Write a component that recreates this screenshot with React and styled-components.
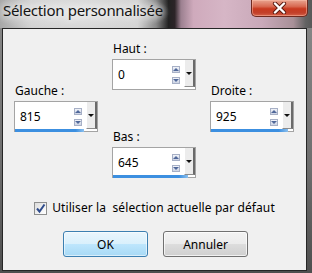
import React from "react";
import styled, { createGlobalStyle } from "styled-components";

const GlobalStyle = createGlobalStyle`
  html, body {
    margin: 0;
    padding: 0;
    background: #5c5c5c;
  }
  body {
    font-family: "Noto Sans", "Open Sans", sans-serif;
    color: #000;
  }
`;

const Window = styled.div`
  width: 312px;
  height: 273px;
  display: flex;
  flex-direction: column;
  overflow: hidden;
  background: linear-gradient(180deg, #8a8a8a 0%, #6e6e6e 60%, #4e4e4e 100%);
`;

const TitleBar = styled.div`
  height: 28px;
  flex: none;
  display: flex;
  align-items: flex-start;
  justify-content: space-between;
  background:
    radial-gradient(ellipse 90px 22px at 80px 12px, #e6e6e6 0%, rgba(222,222,222,0.6) 60%, rgba(222,222,222,0) 100%),
    linear-gradient(90deg, #a8a8a8 0%, #cfcfcf 10%, #d2d2d2 44%, #8a8a8a 50%, #222 54%, #2c2428 56%, #9c8090 58%, #cfaabc 62%, #d6b6c6 72%, #c9a9b9 84%, #a89098 94%, #626262 98%, #585858 100%);
`;

const Title = styled.span`
  padding: 0 0 0 3px;
  font-size: 15px;
  line-height: 20px;
  letter-spacing: -0.3px;
  color: #141414;
  text-shadow: 0 0 6px #f2f2f2, 0 0 10px #eee;
`;

const CloseButton = styled.div`
  width: 57px;
  height: 17px;
  margin-right: 4px;
  box-sizing: border-box;
  border: 1px solid #6e2a20;
  border-top: none;
  border-radius: 0 0 5px 5px;
  display: flex;
  align-items: center;
  justify-content: center;
  background: linear-gradient(180deg, #e9a48f 0%, #d86a52 40%, #c8391f 55%, #c2402a 80%, #d6624a 100%);
  box-shadow: inset 0 0 0 1px rgba(255, 200, 180, 0.45);
`;

const Client = styled.div`
  flex: 1;
  margin: 0 5px 2px 2px;
  border: 1px solid #262626;
  background: #f0f0f0;
  display: flex;
  flex-direction: column;
`;

const Fields = styled.div`
  display: grid;
  grid-template-columns: repeat(3, 84px);
  column-gap: 14px;
  padding-left: 11px;
`;

const Column = styled.div`
  display: flex;
  flex-direction: column;
  padding-top: ${(p) => p.$top}px;
`;

const Label = styled.div`
  font-size: 12px;
  line-height: 16px;
  margin: ${(p) => p.$gap || 0}px 0 2px 1px;
`;

const SpinBox = styled.div`
  position: relative;
  height: 31px;
  box-sizing: border-box;
  border: 1px solid #a4a4a4;
  background: #fff;
  display: flex;
  align-items: center;
`;

const Value = styled.span`
  flex: 1;
  padding-left: 5px;
  font-size: 12px;
  line-height: 16px;
`;

const Spinner = styled.div`
  display: flex;
  flex-direction: column;
  gap: 4px;
  margin-right: 4px;
`;

const SpinButton = styled.div`
  width: 8px;
  height: 7px;
  box-sizing: border-box;
  border: 1px solid #a7b0c6;
  background: linear-gradient(180deg, #f2f4f9 0%, #cdd4e4 100%);
  display: flex;
  align-items: center;
  justify-content: center;

  &::after {
    content: "";
    border-left: 3px solid transparent;
    border-right: 3px solid transparent;
    ${(p) =>
      p.$down
        ? "border-top: 3px solid #50689a;"
        : "border-bottom: 3px solid #50689a;"}
  }
`;

const DropButton = styled.div`
  align-self: stretch;
  width: 8px;
  margin-bottom: 2px;
  background: #ececec;
  border-left: 1px solid #fff;
  border-right: 2px solid #6a6a6a;
  border-bottom: 1px solid #8c8c8c;
  display: flex;
  align-items: center;
  justify-content: center;

  &::after {
    content: "";
    border-left: 3px solid transparent;
    border-right: 3px solid transparent;
    border-top: 3px solid #111;
  }
`;

const FillBar = styled.div`
  position: absolute;
  left: 0;
  bottom: -1px;
  height: 3px;
  width: ${(p) => p.$fill}%;
  background: linear-gradient(90deg, #3c8fe0 0%, #3c8fe0 88%, #8cc0ee 100%);
`;

const CheckRow = styled.label`
  display: flex;
  align-items: center;
  justify-content: center;
  gap: 5px;
  margin-top: 22px;
  font-size: 12px;
  line-height: 16px;
  letter-spacing: 0.1px;
  white-space: pre;
`;

const CheckBox = styled.span`
  width: 13px;
  height: 13px;
  box-sizing: border-box;
  border: 1px solid #8e8f8f;
  background: linear-gradient(135deg, #dcdcdc 0%, #f6f6f6 70%, #fff 100%);
  display: flex;
  align-items: center;
  justify-content: center;
`;

const ButtonRow = styled.div`
  display: flex;
  justify-content: center;
  gap: 15px;
  margin-top: 15px;
  padding-left: 2px;
`;

const Button = styled.div`
  width: 85px;
  height: 26px;
  box-sizing: border-box;
  border-radius: 3px;
  border: 1px solid ${(p) => (p.$primary ? "#3c7fb1" : "#707070")};
  background: ${(p) =>
    p.$primary
      ? "linear-gradient(180deg, #eaf6fd 0%, #d9f0fc 50%, #bee6fd 50%, #a7d9f5 100%)"
      : "linear-gradient(180deg, #f2f2f2 0%, #ebebeb 50%, #dddddd 50%, #cfcfcf 100%)"};
  box-shadow: inset 0 0 0 1px ${(p) => (p.$primary ? "rgba(255,255,255,0.55)" : "rgba(255,255,255,0.7)")};
  display: flex;
  align-items: center;
  justify-content: center;
  font-size: 12px;
`;

const NumberField = ({ value, fill }) => (
  <SpinBox>
    <Value>{value}</Value>
    <Spinner>
      <SpinButton />
      <SpinButton $down />
    </Spinner>
    <DropButton />
    {fill > 0 && <FillBar $fill={fill} />}
  </SpinBox>
);

export default function App() {
  return (
    <>
      <GlobalStyle />
      <Window>
        <TitleBar>
          <Title>Sélection personnalisée</Title>
          <CloseButton>
            <svg width="15" height="12" viewBox="0 0 15 12">
              <path d="M3 1.5 L12 10.5 M12 1.5 L3 10.5" stroke="#5a1a10" strokeWidth="4.2" strokeLinecap="round" />
              <path d="M3 1.5 L12 10.5 M12 1.5 L3 10.5" stroke="#fff" strokeWidth="2.4" strokeLinecap="round" />
            </svg>
          </CloseButton>
        </TitleBar>
        <Client>
          <Fields>
            <Column $top={54}>
              <Label>Gauche :</Label>
              <NumberField value="815" fill={84} />
            </Column>
            <Column $top={12}>
              <Label>Haut :</Label>
              <NumberField value="0" fill={0} />
              <Label $gap={39}>Bas :</Label>
              <NumberField value="645" fill={92} />
            </Column>
            <Column $top={54}>
              <Label>Droite :</Label>
              <NumberField value="925" fill={94} />
            </Column>
          </Fields>
          <CheckRow>
            <CheckBox>
              <svg width="11" height="11" viewBox="0 0 11 11">
                <path d="M2 5.5 L4.5 8.5 L9.5 1.5" fill="none" stroke="#2f4c8c" strokeWidth="2" />
              </svg>
            </CheckBox>
            Utiliser la  sélection actuelle par défaut
          </CheckRow>
          <ButtonRow>
            <Button $primary>OK</Button>
            <Button>Annuler</Button>
          </ButtonRow>
        </Client>
      </Window>
    </>
  );
}
